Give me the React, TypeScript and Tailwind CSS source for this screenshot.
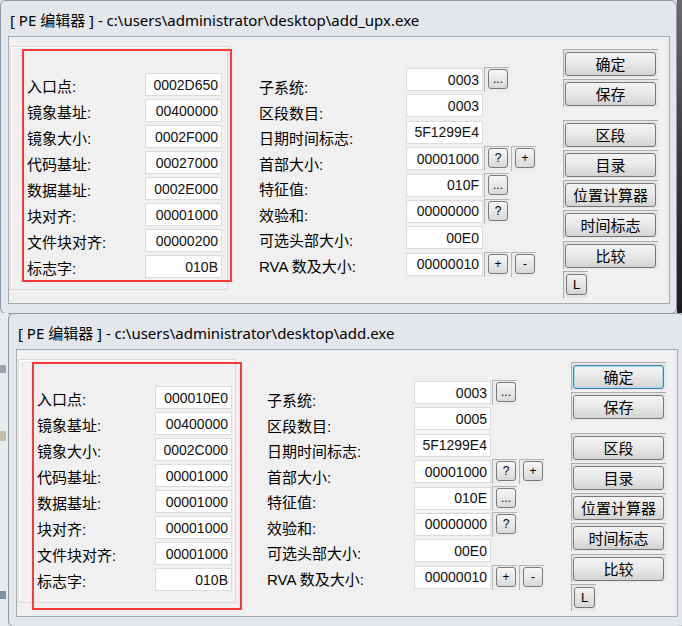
import React from "react";

type MidRow = { value: string; buttons: string[] };

interface PeWindowProps {
  title: string;
  left: string[];
  mid: MidRow[];
  focused?: boolean;
  redClass?: string;
}

const leftLabels = ["入口点:", "镜象基址:", "镜象大小:", "代码基址:", "数据基址:", "块对齐:", "文件块对齐:", "标志字:"];
const midLabels = ["子系统:", "区段数目:", "日期时间标志:", "首部大小:", "特征值:", "效验和:", "可选头部大小:", "RVA 数及大小:"];

const cjk = "font-['Liberation_Sans','Noto_Sans_CJK_SC',sans-serif]";

const ValueBox: React.FC<{ value: string }> = ({ value }) => (
  <div className="flex h-[23px] w-[77px] shrink-0 items-center justify-end border border-[#dcdcdc] bg-white pr-[3px] text-[14px] leading-none text-[#111]">
    {value}
  </div>
);

const SmallButton: React.FC<{ label: string }> = ({ label }) => (
  <div className="h-[25px] w-[25px] shrink-0 border-l border-t border-[#b4b4b4] bg-[#ececec] pl-[3px] pt-[1px]">
    <div className="flex h-[20px] w-[20px] items-center justify-center rounded-[3px] border border-[#7a7a7a] bg-gradient-to-b from-[#f7f7f7] to-[#d9d9d9] text-[12px] leading-none text-black">
      {label}
    </div>
  </div>
);

const BigButton: React.FC<{ label: string; focused?: boolean; className?: string }> = ({ label, focused, className }) => (
  <div className={`h-[28px] w-[95px] border-l border-t border-[#ababab] bg-[#e6e6e6] pl-[1px] pt-[2px] ${className ?? ""}`}>
    <div
      className={`flex h-[24px] w-[91px] items-center justify-center rounded-[3px] border bg-gradient-to-b from-[#f3f3f3] via-[#e8e8e8] to-[#d3d3d3] text-[15px] leading-none text-black ${
        focused ? "border-[#3c7fb1] shadow-[inset_0_0_0_1px_#9fdcf8]" : "border-[#777777]"
      }`}
    >
      {label}
    </div>
  </div>
);

const PeWindow: React.FC<PeWindowProps> = ({ title, left, mid, focused, redClass }) => (
  <div className={`h-[314px] w-[677px] shrink-0 rounded-[6px] border border-[#8e98a3] bg-[#e3e7ec] ${cjk}`}>
    <div className="flex h-[35px] items-center pl-[9px] pt-[4px] font-['Noto_Sans','Noto_Sans_CJK_SC',sans-serif] text-[15px] text-black">
      {title}
    </div>
    <div className="ml-[7px] flex h-[268px] w-[662px] border border-[#a3abb4] bg-[#f0f0f0]">
      {/* group box holding the header fields */}
      <div className="ml-[1px] mt-[9px] h-[244px] w-[218px] border border-[#dadada] shadow-[inset_1px_1px_0_#ffffff]">
        <div className={`mt-[2px] w-[210px] border-2 border-[#ff3838] pl-[3px] pr-[8px] pt-[22px] ${redClass ?? "ml-[11px] h-[233px]"}`}>
          <div className="grid grid-cols-[118px_77px] auto-rows-[26px]">
            {leftLabels.map((label, i) => (
              <React.Fragment key={label}>
                <div className="flex h-[23px] items-center pt-[4px] text-[15px] leading-none text-black">{label}</div>
                <ValueBox value={left[i]} />
              </React.Fragment>
            ))}
          </div>
        </div>
      </div>

      <div className="ml-[31px] mt-[38px] flex w-[147px] flex-col">
        {midLabels.map((label) => (
          <div key={label} className="flex h-[25.5px] items-center text-[15px] leading-none text-black">
            {label}
          </div>
        ))}
      </div>

      <div className="mt-[31px] flex w-[157px] flex-col gap-[3.4px]">
        {mid.map((row, i) => (
          <div key={i} className="flex h-[23px] items-start">
            <ValueBox value={row.value} />
            <div className="-mt-[1px] ml-[1px] flex gap-[2px]">
              {row.buttons.map((b, j) => (
                <SmallButton key={j} label={b} />
              ))}
            </div>
          </div>
        ))}
      </div>

      <div className="mt-[12px] flex w-[95px] flex-col gap-[2px]">
        <BigButton label="确定" focused={focused} />
        <BigButton label="保存" />
        <BigButton label="区段" className="mt-[11px]" />
        <BigButton label="目录" />
        <BigButton label="位置计算器" />
        <BigButton label="时间标志" />
        <BigButton label="比较" className="mt-[1px]" />
        <div className="h-[27px] w-[25px] border-l border-t border-[#ababab] bg-[#e6e6e6] pl-[2px] pt-[2px]">
          <div className="flex h-[21px] w-[21px] items-center justify-center rounded-[3px] border border-[#777777] bg-gradient-to-b from-[#f3f3f3] to-[#d6d6d6] text-[13px] leading-none text-black">
            L
          </div>
        </div>
      </div>
    </div>
  </div>
);

export default function App() {
  return (
    <div className="h-[626px] w-[682px] overflow-hidden bg-[#dedfe0]">
      <div className="flex h-[313px]">
        <PeWindow
          title="[ PE 编辑器 ] - c:\users\administrator\desktop\add_upx.exe"
          left={["0002D650", "00400000", "0002F000", "00027000", "0002E000", "00001000", "00000200", "010B"]}
          mid={[
            { value: "0003", buttons: ["..."] },
            { value: "0003", buttons: [] },
            { value: "5F1299E4", buttons: [] },
            { value: "00001000", buttons: ["?", "+"] },
            { value: "010F", buttons: ["..."] },
            { value: "00000000", buttons: ["?"] },
            { value: "00E0", buttons: [] },
            { value: "00000010", buttons: ["+", "-"] },
          ]}
        />
        <div className="flex-1 bg-gradient-to-b from-[#6b6b6b] via-[#3a3a3a] to-[#1c1c1c]" />
      </div>
      <div className="flex">
        <div className="flex w-[8px] shrink-0 flex-col bg-[#e9eaeb]">
          <div className="mt-[52px] h-[8px] w-[6px] bg-[#9aa5b4]" />
          <div className="mt-[58px] h-[10px] w-[6px] bg-[#c7bda9]" />
          <div className="mt-[150px] h-[8px] w-[6px] bg-[#8390a2]" />
        </div>
        <PeWindow
          title="[ PE 编辑器 ] - c:\users\administrator\desktop\add.exe"
          focused
          redClass="ml-[13px] h-[248px]"
          left={["000010E0", "00400000", "0002C000", "00001000", "00001000", "00001000", "00001000", "010B"]}
          mid={[
            { value: "0003", buttons: ["..."] },
            { value: "0005", buttons: [] },
            { value: "5F1299E4", buttons: [] },
            { value: "00001000", buttons: ["?", "+"] },
            { value: "010E", buttons: ["..."] },
            { value: "00000000", buttons: ["?"] },
            { value: "00E0", buttons: [] },
            { value: "00000010", buttons: ["+", "-"] },
          ]}
        />
      </div>
    </div>
  );
}
